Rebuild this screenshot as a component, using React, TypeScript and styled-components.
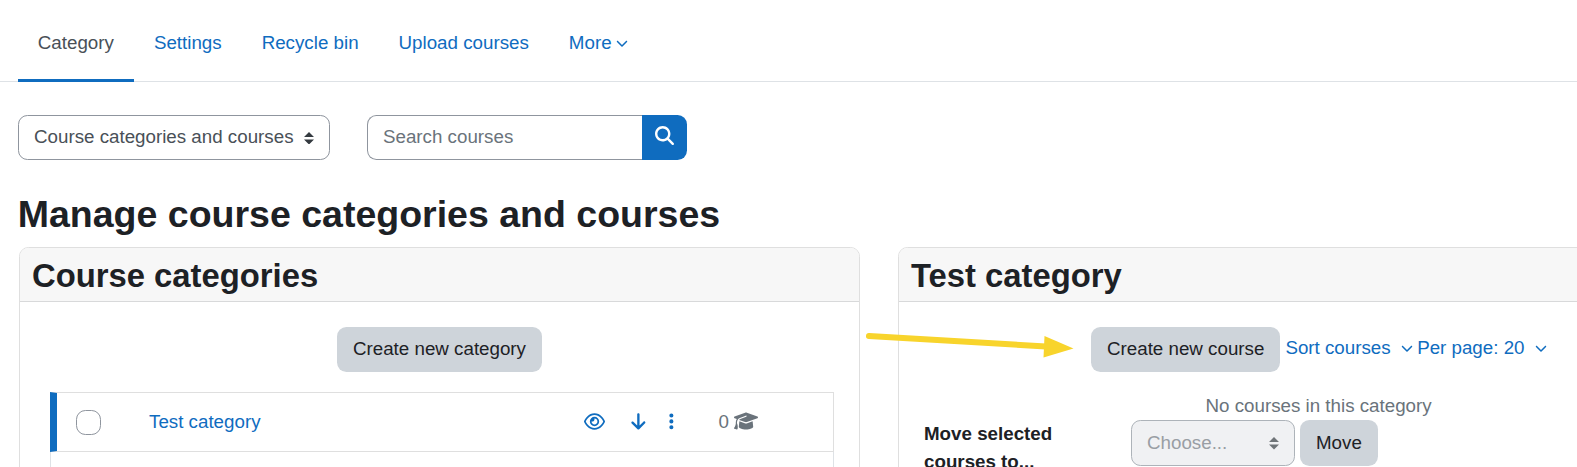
import React from "react";
import styled, { createGlobalStyle } from "styled-components";
import {
  FaArrowDown,
  FaChevronDown,
  FaEllipsisVertical,
  FaGraduationCap,
  FaMagnifyingGlass,
  FaRegEye,
} from "react-icons/fa6";

const GlobalStyle = createGlobalStyle`
  *, *::before, *::after { box-sizing: border-box; }
  html, body { margin: 0; height: 100%; overflow: hidden; }
  body {
    background: #fff;
    color: #1d2125;
    font-family: "Liberation Sans", Arial, sans-serif;
    font-size: 18.75px;
    line-height: 28px;
  }
`;

const Page = styled.div`
  height: 467px;
  overflow: hidden;
`;

const TabBar = styled.nav`
  display: flex;
  height: 82px;
  padding-left: 17.8px;
  border-bottom: 1px solid #dee2e6;
`;

const Tab = styled.a<{ $active?: boolean }>`
  display: flex;
  align-items: center;
  gap: 4.5px;
  height: 82px;
  padding: 7px 20px 0;
  border-bottom: 3px solid ${(p) => (p.$active ? "#0f6cbf" : "transparent")};
  color: ${(p) => (p.$active ? "#495057" : "#0f6cbf")};
  white-space: nowrap;
`;

const Toolbar = styled.div`
  display: flex;
  gap: 37px;
  padding: 33px 18px 0;
`;

const SelectBox = styled.div<{ $width: number; $height?: number; $disabled?: boolean }>`
  display: flex;
  align-items: center;
  justify-content: space-between;
  width: ${(p) => p.$width}px;
  height: ${(p) => p.$height ?? 45}px;
  padding: 0 15px ${(p) => (p.$disabled ? 0 : 1.5)}px;
  border: 1px solid ${(p) => (p.$disabled ? "#adb3b9" : "#8f959e")};
  border-radius: 9.4px;
  background: ${(p) => (p.$disabled ? "#f0f1f3" : "#fff")};
  color: ${(p) => (p.$disabled ? "#999ea4" : "#495057")};
  white-space: nowrap;

  svg {
    margin-top: ${(p) => (p.$disabled ? 0.5 : 2.5)}px;
    fill: ${(p) => (p.$disabled ? "#6f7478" : "#343a40")};
  }
`;

const SearchGroup = styled.div`
  display: flex;
`;

const SearchInput = styled.input`
  width: 275px;
  height: 45px;
  padding: 0 15px 2px;
  border: 1px solid #8f959e;
  border-right: 0;
  border-radius: 9.4px 0 0 9.4px;
  font: inherit;
  outline: none;

  &::placeholder {
    color: #6a737b;
    opacity: 1;
  }
`;

const SearchButton = styled.button`
  display: flex;
  align-items: center;
  justify-content: center;
  width: 45px;
  height: 45px;
  padding: 0 0 4px;
  border: 0;
  border-radius: 0 9.4px 9.4px 0;
  background: #0f6cbf;
  color: #fff;
  font-size: 19px;
`;

const PageTitle = styled.h2`
  margin: 32px 0 10px 17.75px;
  font-size: 37.5px;
  line-height: 45px;
`;

const Columns = styled.div`
  display: flex;
  gap: 38px;
  width: 1700px;
  padding-left: 19px;
`;

const Card = styled.section<{ $width: number }>`
  flex: none;
  width: ${(p) => p.$width}px;
  height: 400px;
  border: 1px solid #dfdfdf;
  border-radius: 9.4px;
  overflow: hidden;
`;

const CardHeader = styled.h3`
  height: 54px;
  margin: 0;
  padding: 8px 12px 0;
  border-bottom: 1px solid #d8d9da;
  background: #f7f7f7;
  font-size: 32.8px;
  line-height: 40px;
`;

const Button = styled.button<{ $height?: number }>`
  height: ${(p) => p.$height ?? 45}px;
  padding: 0 16px ${(p) => (p.$height ? 0 : 2)}px;
  border: 0;
  border-radius: 9.4px;
  background: #ced4da;
  color: #1d2125;
  font: inherit;
  white-space: nowrap;
`;

const CenteredActions = styled.div`
  display: flex;
  justify-content: center;
  padding: 25px 0 20px;
`;

const CategoryList = styled.div`
  height: 120px;
  margin: 0 25px 0 30px;
  border: 1px solid #dee2e6;
  border-width: 0 1px;
`;

const CategoryRow = styled.div`
  display: flex;
  align-items: center;
  height: 60px;
  margin: 0 -1px;
  padding: 0 75px 0 19px;
  border: 1px solid #dfdfdf;
  border-left: 7px solid #0f6cbf;
`;

const Checkbox = styled.span`
  width: 25px;
  height: 25px;
  margin-top: 1px;
  border: 1px solid #8f959e;
  border-radius: 9.4px;
`;

const CategoryLink = styled.a`
  flex: 1;
  margin-left: 48px;
  color: #0f6cbf;
`;

const RowIcons = styled.div`
  display: flex;
  align-items: center;
  padding-bottom: 2px;
  color: #0f6cbf;
  font-size: 18.75px;
`;

const IconSlot = styled.span<{ $width: number }>`
  display: flex;
  align-items: center;
  justify-content: center;
  width: ${(p) => p.$width}px;
`;

const CourseCount = styled.span`
  display: flex;
  align-items: center;
  gap: 5px;
  margin-left: 35px;
  color: #6a737b;

  svg {
    margin-bottom: 2px;
  }
`;

const CourseActions = styled.div`
  display: flex;
  align-items: center;
  padding: 25px 0 0 192px;
`;

const DropdownLink = styled.a`
  display: flex;
  align-items: center;
  gap: 10px;
  margin: -3px 0 0 5px;
  color: #0f6cbf;
  white-space: nowrap;

  & + & {
    margin-left: 4.5px;
  }
`;

const EmptyNote = styled.p`
  margin: 20px 0 0 306.5px;
  color: #6a737b;
`;

const MoveRow = styled.div`
  display: flex;
  align-items: flex-start;
  padding-left: 25px;
`;

const MoveLabel = styled.label`
  width: 207px;
  padding-right: 60px;
  font-weight: bold;
`;

const MoveControls = styled.div`
  display: flex;
  gap: 5px;
`;

const Overlay = styled.svg`
  position: absolute;
  left: 860px;
  top: 320px;
`;

const Sorter = () => (
  <svg width="10" height="12.5" viewBox="0 0 4 5">
    <path d="M2 0L0 2h4zm0 5L0 3h4z" />
  </svg>
);

export default function App() {
  return (
    <Page>
      <GlobalStyle />
      <TabBar>
        <Tab $active>Category</Tab>
        <Tab>Settings</Tab>
        <Tab>Recycle bin</Tab>
        <Tab>Upload courses</Tab>
        <Tab>
          More <FaChevronDown size={12} />
        </Tab>
      </TabBar>
      <Toolbar>
        <SelectBox $width={312}>
          Course categories and courses <Sorter />
        </SelectBox>
        <SearchGroup>
          <SearchInput placeholder="Search courses" />
          <SearchButton aria-label="Search courses">
            <FaMagnifyingGlass />
          </SearchButton>
        </SearchGroup>
      </Toolbar>
      <PageTitle>Manage course categories and courses</PageTitle>
      <Columns>
        <Card $width={841}>
          <CardHeader>Course categories</CardHeader>
          <CenteredActions>
            <Button>Create new category</Button>
          </CenteredActions>
          <CategoryList>
            <CategoryRow>
              <Checkbox />
              <CategoryLink>Test category</CategoryLink>
              <RowIcons>
                <IconSlot $width={44}>
                  <FaRegEye size={21} />
                </IconSlot>
                <IconSlot $width={43}>
                  <FaArrowDown />
                </IconSlot>
                <IconSlot $width={24}>
                  <FaEllipsisVertical />
                </IconSlot>
              </RowIcons>
              <CourseCount>
                0 <FaGraduationCap size={24} />
              </CourseCount>
            </CategoryRow>
          </CategoryList>
        </Card>
        <Card $width={750}>
          <CardHeader>Test category</CardHeader>
          <CourseActions>
            <Button>Create new course</Button>
            <DropdownLink>
              Sort courses <FaChevronDown size={12} />
            </DropdownLink>
            <DropdownLink>
              Per page: 20 <FaChevronDown size={12} />
            </DropdownLink>
          </CourseActions>
          <EmptyNote>No courses in this category</EmptyNote>
          <MoveRow>
            <MoveLabel>Move selected courses to...</MoveLabel>
            <MoveControls>
              <SelectBox $width={164} $height={46} $disabled>
                Choose... <Sorter />
              </SelectBox>
              <Button $height={46}>Move</Button>
            </MoveControls>
          </MoveRow>
        </Card>
      </Columns>
      <Overlay width="220" height="50" viewBox="0 0 220 50">
        <path d="M9 16L186 26.5" stroke="#f8d42c" strokeWidth="6" strokeLinecap="round" />
        <path d="M184.5 16L213.5 28.5L183.5 37.5Z" fill="#f8d42c" />
      </Overlay>
    </Page>
  );
}
